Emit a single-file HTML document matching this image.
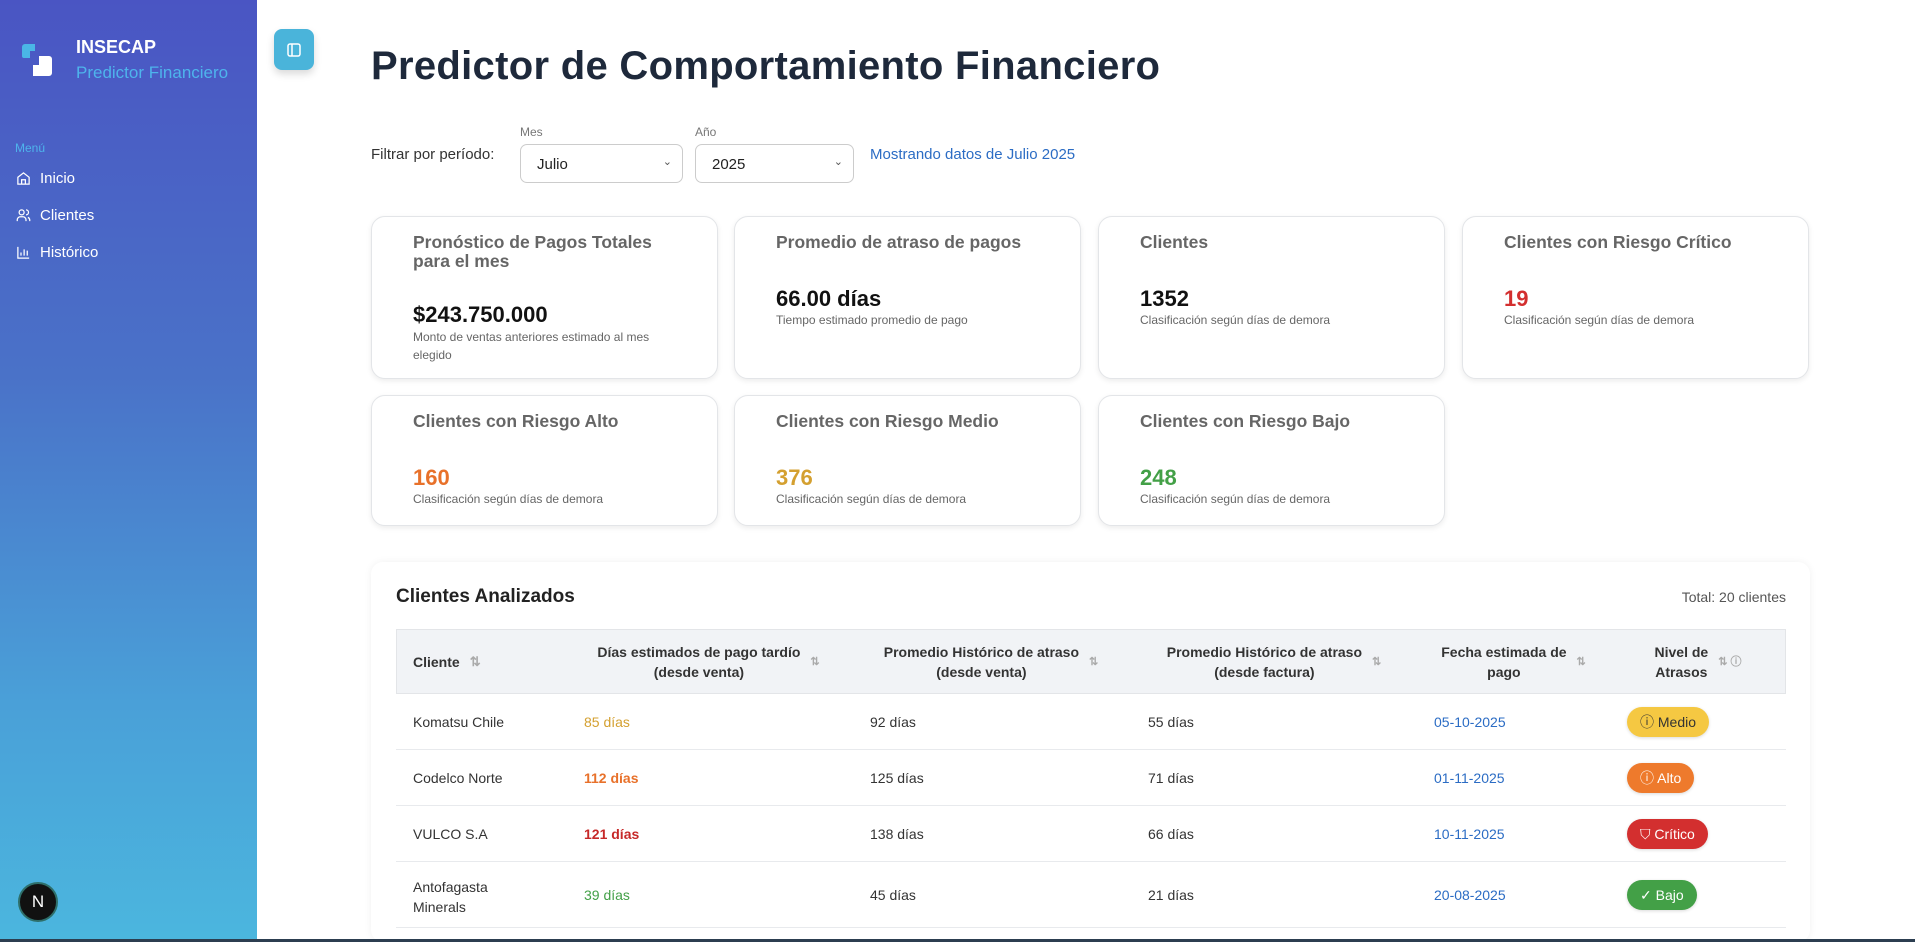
<!DOCTYPE html>
<html><head><meta charset="utf-8"><style>
*{box-sizing:border-box;margin:0;padding:0}
body{width:1915px;height:942px;overflow:hidden;font-family:"Liberation Sans",sans-serif;background:#fff;position:relative;color:#222}
.sb{position:absolute;left:0;top:0;width:257px;height:939px;background:linear-gradient(180deg,#4a55c3 0%,#4a72c8 40%,#4aa0d8 75%,#4bb6de 100%)}
.bot{position:absolute;left:0;top:939px;width:1915px;height:3px;background:#2c3e50}
.abs{position:absolute}
.menu{color:#fff;font-size:15px;position:absolute;left:16px;display:flex;align-items:center;gap:9px}
.card{position:absolute;border:1px solid #e3e5e8;border-radius:14px;background:#fff;box-shadow:0 2px 6px rgba(0,0,0,.08);width:347px}
.card .t{position:absolute;left:41px;top:16px;font-size:17.5px;font-weight:bold;color:#666;line-height:19px;width:270px}
.card .v{position:absolute;left:41px;font-size:22px;font-weight:bold;color:#111}
.card .s{position:absolute;left:41px;font-size:12px;color:#666;line-height:18px;width:260px}
.th{position:absolute;top:629px;height:65px;font-size:14px;font-weight:bold;color:#333;text-align:center;line-height:20px;display:flex;align-items:center;justify-content:center}
.row{position:absolute;left:396px;width:1390px;border-bottom:1px solid #e8eaed}
.c{position:absolute;font-size:14px;color:#333}
.badge{position:absolute;height:30px;border-radius:15px;font-size:14px;display:flex;align-items:center;gap:6px;padding:0 13px;box-shadow:0 1px 3px rgba(0,0,0,.15)}
.ar{color:#aaa;font-size:11px;margin-left:10px}
</style></head><body>
<div class="sb">
  <svg class="abs" style="left:22px;top:44px" width="30" height="32" viewBox="0 0 30 32"><path d="M3 0h10v7H8v7H2a2 2 0 01-2-2V3a3 3 0 013-3z" fill="#4ab6e6"/><path d="M17 12h10a3 3 0 013 3v14a3 3 0 01-3 3H11v-11h6z" fill="#fff"/></svg>
  <div class="abs" style="left:76px;top:37px;color:#fff;font-weight:bold;font-size:18px">INSECAP</div>
  <div class="abs" style="left:76px;top:63px;color:#4eb4ec;font-size:17px">Predictor Financiero</div>
  <div class="abs" style="left:15px;top:141px;color:#4eb4ec;font-size:12px">Menú</div>
  <div class="menu" style="top:170px"><svg width="15" height="15" viewBox="0 0 24 24" fill="none" stroke="#fff" stroke-width="2"><path d="M3 10l9-7 9 7v11H3z"/><path d="M9 21v-7h6v7"/></svg>Inicio</div>
  <div class="menu" style="top:207px"><svg width="15" height="15" viewBox="0 0 24 24" fill="none" stroke="#fff" stroke-width="2"><circle cx="9" cy="7" r="4"/><path d="M2 21v-2a5 5 0 015-5h4a5 5 0 015 5v2M16 3a4 4 0 010 8M22 21v-2a5 5 0 00-3-4"/></svg>Clientes</div>
  <div class="menu" style="top:244px"><svg width="15" height="15" viewBox="0 0 24 24" fill="none" stroke="#fff" stroke-width="2"><path d="M3 3v18h18M8 17v-5M13 17V7M18 17v-8"/></svg>Histórico</div>
  <div class="abs" style="left:18px;top:882px;width:40px;height:40px;border-radius:50%;background:#111;border:2px solid #2e6f6a;color:#fff;font-size:17px;display:flex;align-items:center;justify-content:center">N</div>
</div>
<div class="abs" style="left:274px;top:29px;width:40px;height:41px;border-radius:8px;background:#4ab4da;box-shadow:0 4px 8px rgba(0,0,0,.15);display:flex;align-items:center;justify-content:center"><svg width="14" height="14" viewBox="0 0 14 14" fill="none" stroke="#fff" stroke-width="1.5"><rect x="1" y="1" width="12" height="12" rx="2"/><path d="M5 1v12"/></svg></div>
<div class="abs" style="left:371px;top:44px;font-size:40px;font-weight:bold;color:#1e293b;letter-spacing:0.3px">Predictor de Comportamiento Financiero</div>
<div class="abs" style="left:371px;top:146px;font-size:15px;color:#333">Filtrar por período:</div>
<div class="abs" style="left:520px;top:125px;font-size:12px;color:#777">Mes</div>
<div class="abs" style="left:695px;top:125px;font-size:12px;color:#777">Año</div>
<div class="abs" style="left:520px;top:144px;width:163px;height:39px;border:1px solid #ccc;border-radius:7px;font-size:15px;padding:11px 16px;color:#222">Julio<span style="position:absolute;right:10px;top:10px;font-size:11px;color:#555">&#8964;</span></div>
<div class="abs" style="left:695px;top:144px;width:159px;height:39px;border:1px solid #ccc;border-radius:7px;font-size:15px;padding:11px 16px;color:#222">2025<span style="position:absolute;right:10px;top:10px;font-size:11px;color:#555">&#8964;</span></div>
<div class="abs" style="left:870px;top:146px;font-size:15px;color:#2b6cc4">Mostrando datos de Julio 2025</div>

<div class="card" style="left:371px;top:216px;height:163px"><div class="t">Pronóstico de Pagos Totales para el mes</div><div class="v" style="top:85px">$243.750.000</div><div class="s" style="top:111px">Monto de ventas anteriores estimado al mes elegido</div></div>
<div class="card" style="left:734px;top:216px;height:163px"><div class="t">Promedio de atraso de pagos</div><div class="v" style="top:69px">66.00 días</div><div class="s" style="top:94px">Tiempo estimado promedio de pago</div></div>
<div class="card" style="left:1098px;top:216px;height:163px"><div class="t">Clientes</div><div class="v" style="top:69px">1352</div><div class="s" style="top:94px">Clasificación según días de demora</div></div>
<div class="card" style="left:1462px;top:216px;height:163px"><div class="t">Clientes con Riesgo Crítico</div><div class="v" style="top:69px;color:#d32f2f">19</div><div class="s" style="top:94px">Clasificación según días de demora</div></div>
<div class="card" style="left:371px;top:395px;height:131px"><div class="t">Clientes con Riesgo Alto</div><div class="v" style="top:69px;color:#e8712a">160</div><div class="s" style="top:94px">Clasificación según días de demora</div></div>
<div class="card" style="left:734px;top:395px;height:131px"><div class="t">Clientes con Riesgo Medio</div><div class="v" style="top:69px;color:#d4a030">376</div><div class="s" style="top:94px">Clasificación según días de demora</div></div>
<div class="card" style="left:1098px;top:395px;height:131px"><div class="t">Clientes con Riesgo Bajo</div><div class="v" style="top:69px;color:#43a047">248</div><div class="s" style="top:94px">Clasificación según días de demora</div></div>

<div class="abs" style="left:371px;top:562px;width:1439px;height:380px;background:#fff;box-shadow:0 0 8px rgba(0,0,0,.06);border-radius:12px"></div>
<div class="abs" style="left:396px;top:586px;font-size:19px;font-weight:bold;color:#222">Clientes Analizados</div>
<div class="abs" style="left:1660px;top:589px;width:126px;text-align:right;font-size:14px;color:#555">Total: 20 clientes</div>
<div class="abs" style="left:396px;top:629px;width:1390px;height:65px;background:#f1f3f6;border:1px solid #e3e5e8"></div>
<div class="th" style="left:396px;width:170px;justify-content:flex-start;padding-left:17px">Cliente<span class="ar" style="font-size:13px">⇅</span></div>
<div class="th" style="left:566px;width:285px">Días estimados de pago tardío<br>(desde venta)<span class="ar">⇅</span></div>
<div class="th" style="left:851px;width:280px">Promedio Histórico de atraso<br>(desde venta)<span class="ar">⇅</span></div>
<div class="th" style="left:1131px;width:286px">Promedio Histórico de atraso<br>(desde factura)<span class="ar">⇅</span></div>
<div class="th" style="left:1417px;width:193px">Fecha estimada de<br>pago<span class="ar">⇅</span></div>
<div class="th" style="left:1610px;width:176px">Nivel de<br>Atrasos<span class="ar">⇅ ⓘ</span></div>

<div class="row" style="top:694px;height:56px"></div>
<div class="row" style="top:750px;height:56px"></div>
<div class="row" style="top:806px;height:56px"></div>
<div class="row" style="top:862px;height:66px"></div>

<div class="c" style="left:413px;top:714px">Komatsu Chile</div>
<div class="c" style="left:584px;top:714px;color:#d4a030">85 días</div>
<div class="c" style="left:870px;top:714px">92 días</div>
<div class="c" style="left:1148px;top:714px">55 días</div>
<div class="c" style="left:1434px;top:714px;color:#2b6cc4">05-10-2025</div>
<div class="badge" style="left:1627px;top:707px;background:#f5c842;color:#333">ⓘ Medio</div>

<div class="c" style="left:413px;top:770px">Codelco Norte</div>
<div class="c" style="left:584px;top:770px;color:#e8712a;font-weight:bold">112 días</div>
<div class="c" style="left:870px;top:770px">125 días</div>
<div class="c" style="left:1148px;top:770px">71 días</div>
<div class="c" style="left:1434px;top:770px;color:#2b6cc4">01-11-2025</div>
<div class="badge" style="left:1627px;top:763px;background:#ee7a2c;color:#fff">ⓘ Alto</div>

<div class="c" style="left:413px;top:826px">VULCO S.A</div>
<div class="c" style="left:584px;top:826px;color:#c62828;font-weight:bold">121 días</div>
<div class="c" style="left:870px;top:826px">138 días</div>
<div class="c" style="left:1148px;top:826px">66 días</div>
<div class="c" style="left:1434px;top:826px;color:#2b6cc4">10-11-2025</div>
<div class="badge" style="left:1627px;top:819px;background:#d32f2f;color:#fff">⛉ Crítico</div>

<div class="c" style="left:413px;top:877px;line-height:20px">Antofagasta<br>Minerals</div>
<div class="c" style="left:584px;top:887px;color:#43a047">39 días</div>
<div class="c" style="left:870px;top:887px">45 días</div>
<div class="c" style="left:1148px;top:887px">21 días</div>
<div class="c" style="left:1434px;top:887px;color:#2b6cc4">20-08-2025</div>
<div class="badge" style="left:1627px;top:880px;background:#43a047;color:#fff">✓ Bajo</div>
<div class="bot"></div>
</body></html>
